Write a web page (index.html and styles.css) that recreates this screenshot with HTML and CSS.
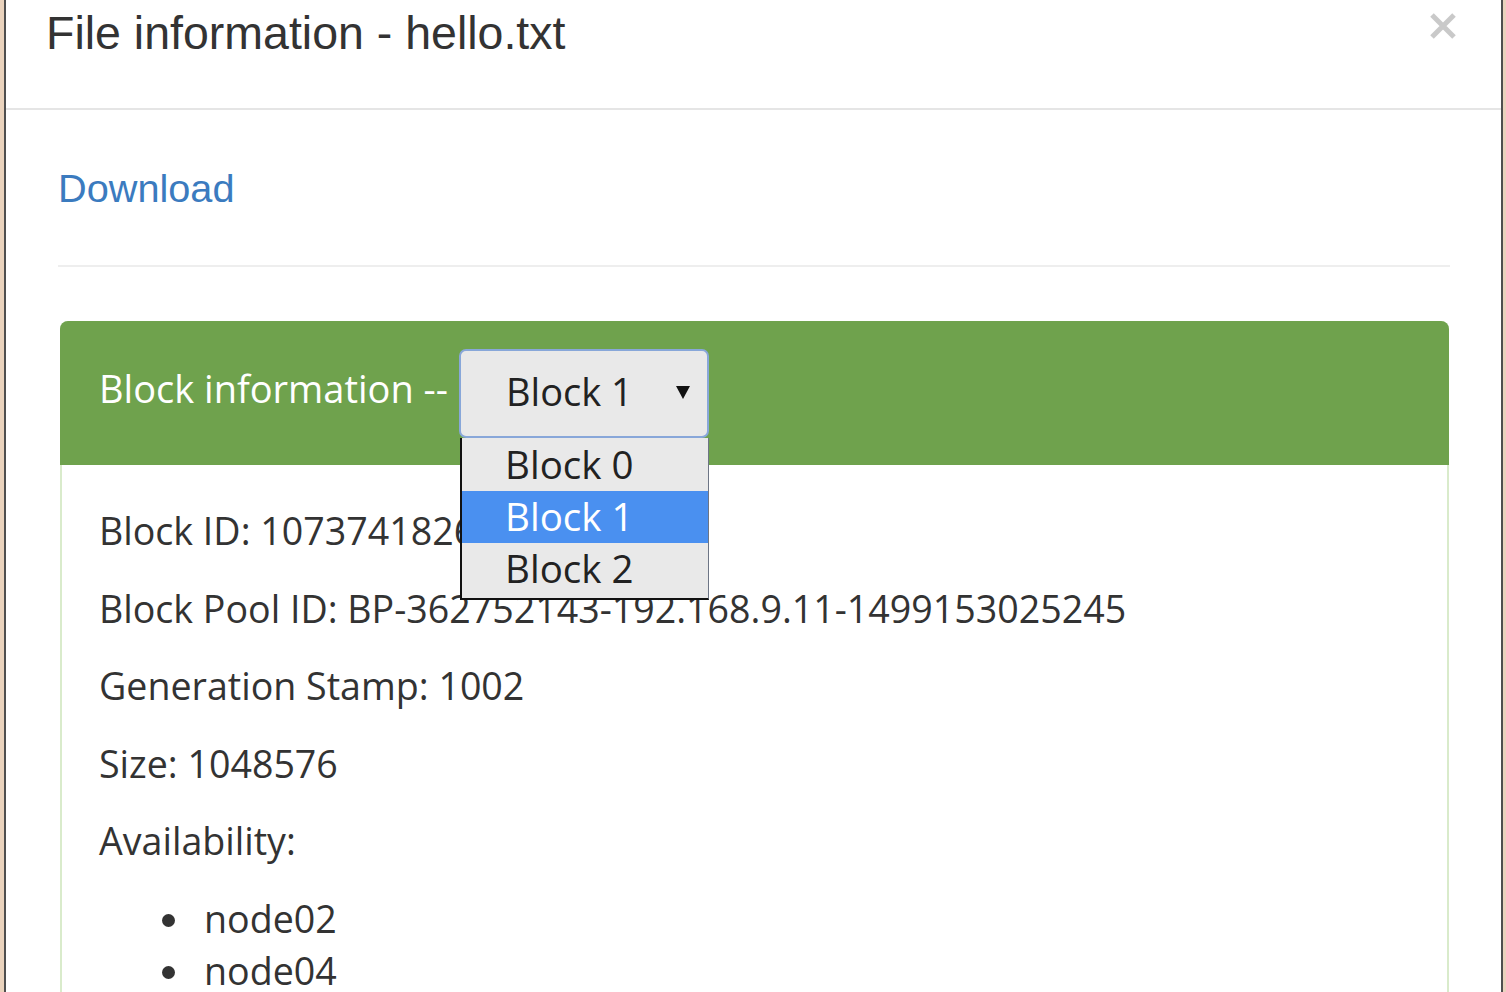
FILE: index.html
```html
<!DOCTYPE html>
<html>
<head>
<meta charset="utf-8">
<title>File information</title>
<link rel="stylesheet" href="styles.css">
</head>
<body>
<div class="modal">
  <div class="modal-header">
    <h4 class="modal-title">File information - hello.txt</h4>
    <svg class="close" width="28" height="28" viewBox="0 0 28 28" aria-label="Close">
      <path d="M3 3 L25 25 M25 3 L3 25" stroke="#c9c9c9" stroke-width="5" stroke-linecap="butt" fill="none"/>
    </svg>
  </div>
  <div class="modal-body">
    <div class="download-row"><a class="download" href="#">Download</a></div>
    <hr class="sep">
    <div class="panel">
      <div class="panel-heading">
        <span class="panel-title">Block information --</span>
        <div class="select-wrap">
          <div class="select">
            <span class="select-value">Block 1</span>
            <svg class="caret" width="14" height="13" viewBox="0 0 14 13"><path d="M0 0 H14 L7 13 Z" fill="#111"/></svg>
          </div>
          <ul class="options">
            <li class="option">Block 0</li>
            <li class="option selected">Block 1</li>
            <li class="option">Block 2</li>
          </ul>
        </div>
      </div>
      <div class="panel-body">
        <p>Block ID: 1073741826</p>
        <p>Block Pool ID: BP-362752143-192.168.9.11-1499153025245</p>
        <p>Generation Stamp: 1002</p>
        <p>Size: 1048576</p>
        <p>Availability:</p>
        <ul class="nodes">
          <li>node02</li>
          <li>node04</li>
        </ul>
      </div>
    </div>
  </div>
</div>
</body>
</html>
```
FILE: styles.css
```css
html, body {
  margin: 0;
  padding: 0;
  height: 100%;
  overflow: hidden;
}
body {
  background: #ead3bd;
}
.modal {
  box-sizing: border-box;
  margin: 0 3px 0 4px;
  height: 100%;
  background: #fff;
  border-left: 2px solid #4f4f4f;
  border-right: 2px solid #4f4f4f;
  color: #333;
}
.modal-header {
  box-sizing: border-box;
  height: 110px;
  padding: 8px 44px 0 40px;
  border-bottom: 2px solid #e5e5e5;
  display: flex;
  justify-content: space-between;
  align-items: flex-start;
}
.modal-title {
  margin: 0;
  font-family: "Liberation Sans", Arial, sans-serif;
  font-weight: normal;
  font-size: 46.5px;
  line-height: 51px;
  color: #333;
}
.close {
  margin-top: 4px;
  display: block;
}
.modal-body {
  padding: 52px 51px 0 52px;
}
.download-row {
  font-family: "Liberation Sans", Arial, sans-serif;
  font-size: 39.7px;
  line-height: 52px;
}
.download {
  color: #3b7bbf;
  text-decoration: none;
}
.sep {
  margin: 51px 0 54px;
  border: 0;
  border-top: 2px solid #eeeeee;
  height: 0;
}
.panel {
  margin: 0 1px 0 2px;
  border: 2px solid #d9ebcb;
  border-radius: 8px;
  font-family: "Open Sans", "Noto Sans", sans-serif;
  font-size: 37.6px;
  line-height: 52px;
}
.panel-heading {
  box-sizing: border-box;
  height: 144px;
  margin: -2px -2px 0 -2px;
  background: #6fa24d;
  border-radius: 8px 8px 0 0;
  padding: 0 0 0 39px;
  display: flex;
  align-items: center;
}
.panel-title {
  color: #fff;
  font-size: 38px;
  margin-bottom: 11px;
}
.select-wrap {
  position: relative;
  margin-left: 11px;
}
.select {
  box-sizing: border-box;
  width: 250px;
  height: 89px;
  background: #e9e9e9;
  border: 2px solid #88a7d9;
  border-radius: 7px;
  display: flex;
  align-items: center;
  justify-content: space-between;
  padding: 0 17px 5px 45px;
  color: #222;
  font-size: 38px;
}
.caret {
  display: block;
  margin-top: 4px;
}
.options {
  position: absolute;
  top: 89px;
  left: 1px;
  width: 249px;
  box-sizing: border-box;
  margin: 0;
  padding: 1px 0 3px;
  list-style: none;
  background: #e9e9e9;
  border-left: 2px solid #111;
  border-bottom: 2px solid #111;
  border-right: 1px solid #6d7585;
  z-index: 5;
  font-size: 38.5px;
}
.option {
  height: 52px;
  line-height: 50px;
  padding-left: 43px;
  color: #222;
}
.option.selected {
  background: #4a90f0;
  color: #fff;
}
.panel-body {
  padding: 40px 38px 40px 37px;
}
.panel-body p {
  margin: 0 0 25.5px;
}
.nodes {
  margin: 0;
  padding-left: 105px;
  list-style: none;
}
.nodes li::before {
  content: "";
  display: inline-block;
  width: 13px;
  height: 13px;
  border-radius: 50%;
  background: #333;
  margin-left: -42px;
  margin-right: 29px;
  vertical-align: 6px;
}
```
